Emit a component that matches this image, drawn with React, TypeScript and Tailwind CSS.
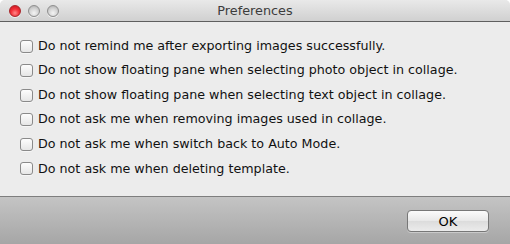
import React from "react";

const items = [
  "Do not remind me after exporting images successfully.",
  "Do not show floating pane when selecting photo object in collage.",
  "Do not show floating pane when selecting text object in collage.",
  "Do not ask me when removing images used in collage.",
  "Do not ask me when switch back to Auto Mode.",
  "Do not ask me when deleting template.",
];

function Light({ red }: { red?: boolean }) {
  return (
    <div
      className={
        red
          ? "w-[12px] h-[12px] rounded-full border border-[#a8262a] bg-[radial-gradient(circle_at_50%_70%,#ff8a8a_0%,#f4323a_45%,#c4121c_100%)] shadow-[0_1px_0_rgba(255,255,255,0.6)]"
          : "w-[12px] h-[12px] rounded-full border border-[#8e8e8e] bg-[radial-gradient(circle_at_50%_70%,#f4f4f4_0%,#d4d4d4_50%,#a9a9a9_100%)] shadow-[0_1px_0_rgba(255,255,255,0.6)]"
      }
    />
  );
}

export default function App() {
  return (
    <div
      className="w-[510px] h-[244px] flex flex-col bg-[#ececec] rounded-t-[5px] overflow-hidden"
      style={{ fontFamily: '"DejaVu Sans", "Lucida Grande", sans-serif' }}
    >
      <div className="h-[22px] shrink-0 relative flex items-center bg-[linear-gradient(#e9e9e9,#d0d0d0)] border-b border-[#5f5f5f]">
        <div className="flex items-center gap-[7px] pl-[9px] pt-[1px]">
          <Light red />
          <Light />
          <Light />
        </div>
        <div className="absolute inset-0 flex items-center justify-center text-[12.8px] text-[#3c3c3c] leading-none pt-[1px]">
          Preferences
        </div>
      </div>
      <div className="flex-1 flex flex-col pt-[17px] pl-[20px] gap-[10.6px]">
        {items.map((t) => (
          <div key={t} className="flex items-center h-[14px]">
            <div className="w-[13px] h-[13px] rounded-[3px] border border-[#8a8a8a] bg-[linear-gradient(#fdfdfd,#e6e6e6)] shadow-[0_1px_0_rgba(255,255,255,0.5)]" />
            <span className="ml-[5px] text-[12.7px] text-[#111] leading-none">{t}</span>
          </div>
        ))}
      </div>
      <div className="h-[48px] shrink-0 border-t border-[#7e7e7e] bg-[linear-gradient(#c4c4c4,#a6a6a6)] flex items-start justify-end pr-[21px] pt-[13px]">
        <button className="w-[82px] h-[22px] rounded-[4px] border border-[#777] bg-[linear-gradient(#fbfbfb,#e8e8e8_50%,#dcdcdc_51%,#ebebeb)] text-[13px] text-black leading-none shadow-[0_1px_0_rgba(255,255,255,0.35)]">
          OK
        </button>
      </div>
    </div>
  );
}
